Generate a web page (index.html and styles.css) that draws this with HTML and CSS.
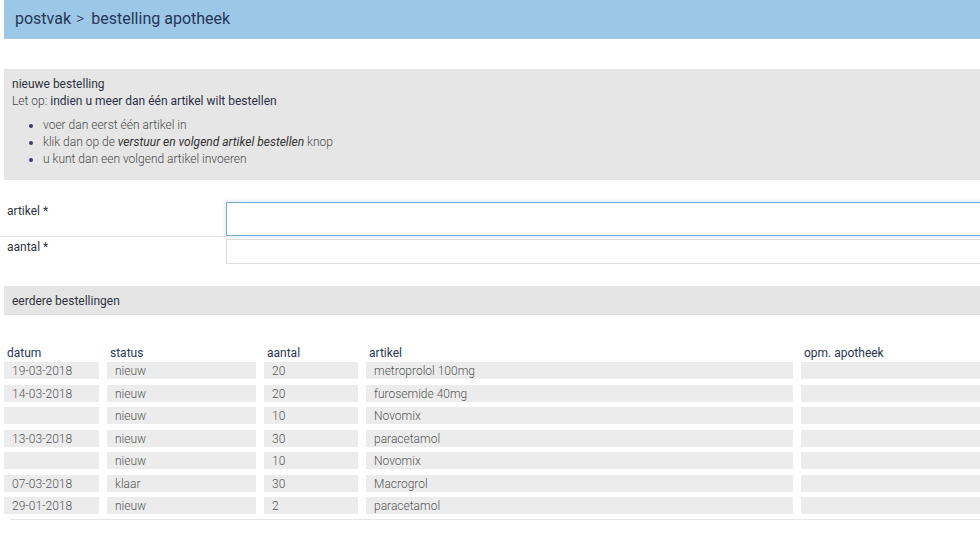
FILE: index.html
```html
<!DOCTYPE html>
<html lang="nl">
<head>
<meta charset="utf-8">
<title>bestelling apotheek</title>
<link rel="stylesheet" href="styles.css">
</head>
<body>
<div class="page">
  <header class="titlebar">
    <h1 class="title">postvak <span class="sep">&gt;</span> bestelling apotheek</h1>
  </header>

  <section class="notice">
    <p class="notice-title">nieuwe bestelling</p>
    <p class="notice-warn"><span class="light">Let op:</span> indien u meer dan één artikel wilt bestellen</p>
    <ul class="notice-list">
      <li>voer dan eerst één artikel in</li>
      <li>klik dan op de <em>verstuur en volgend artikel bestellen</em> knop</li>
      <li>u kunt dan een volgend artikel invoeren</li>
    </ul>
  </section>

  <form class="form">
    <div class="form-row form-row-first">
      <label class="form-label" for="artikel">artikel *</label>
      <input class="form-input form-input-focus" id="artikel" type="text">
    </div>
    <div class="form-row form-row-second">
      <label class="form-label" for="aantal">aantal *</label>
      <input class="form-input form-input-small" id="aantal" type="text">
    </div>
  </form>

  <section class="section-bar">eerdere bestellingen</section>

  <div class="orders">
    <div class="th">datum</div>
    <div class="th">status</div>
    <div class="th">aantal</div>
    <div class="th">artikel</div>
    <div class="th">opm. apotheek</div>

    <div class="td">19-03-2018</div><div class="td">nieuw</div><div class="td">20</div><div class="td">metroprolol 100mg</div><div class="td"></div>
    <div class="td">14-03-2018</div><div class="td">nieuw</div><div class="td">20</div><div class="td">furosemide 40mg</div><div class="td"></div>
    <div class="td"></div><div class="td">nieuw</div><div class="td">10</div><div class="td">Novomix</div><div class="td"></div>
    <div class="td">13-03-2018</div><div class="td">nieuw</div><div class="td">30</div><div class="td">paracetamol</div><div class="td"></div>
    <div class="td"></div><div class="td">nieuw</div><div class="td">10</div><div class="td">Novomix</div><div class="td"></div>
    <div class="td">07-03-2018</div><div class="td">klaar</div><div class="td">30</div><div class="td">Macrogrol</div><div class="td"></div>
    <div class="td">29-01-2018</div><div class="td">nieuw</div><div class="td">2</div><div class="td">paracetamol</div><div class="td"></div>
  </div>
  <div class="orders-end"></div>
</div>
</body>
</html>
```

FILE: styles.css
```css
html, body {
  margin: 0;
  padding: 0;
  overflow: hidden;
  background: #ffffff;
}

body {
  font-family: Roboto, "Liberation Sans", Arial, sans-serif;
  font-size: 12px;
  line-height: 17px;
  color: #2b3550;
}

.page {
  width: 1040px;
  padding-left: 4px;
}

.titlebar {
  height: 39px;
  background: #9cc7e6;
  display: flex;
  align-items: center;
  padding-left: 11px;
}

.title {
  margin: 0;
  font-size: 16px;
  font-weight: 400;
  line-height: 20px;
  color: #263659;
  margin-top: -2px;
}

.sep {
  font-weight: 300;
  margin: 0 3px 0 1px;
}

.notice {
  margin-top: 30px;
  background: #e6e6e6;
  padding: 7px 8px 13px 8px;
  height: 91px;
}

.notice p {
  margin: 0;
}

.notice-title {
  color: #2f3340;
}

.notice-warn {
  color: #2b3045;
}

.light {
  font-weight: 300;
  color: #444;
}

.notice-list {
  margin: 7px 0 0 0;
  padding-left: 31px;
  font-weight: 300;
  color: #4a4a4a;
}

.notice-list li::marker {
  color: #3a4060;
}

.notice-list em {
  font-weight: 400;
  color: #333;
}

.form {
  margin-top: 22px;
  margin-left: -4px;
}

.form-row {
  display: grid;
  grid-template-columns: 226px 1fr;
  align-items: start;
}

.form-label {
  padding-left: 7px;
  color: #2f3340;
}

.form-row-first .form-label {
  padding-top: 1px;
  box-sizing: border-box;
  border-bottom: 1px solid #e3e3e3;
  height: 35px;
}

.form-row-second .form-label {
  padding-top: 2px;
}

.form-input {
  box-sizing: border-box;
  margin: 0;
  width: 100%;
  font: inherit;
  background: #fff;
  border: 1px solid #dcdcdc;
  outline: none;
}

.form-input-focus {
  height: 34px;
  border-color: #79a7cd;
  box-shadow: 0 0 3px 1px rgba(140, 190, 230, 0.35);
}

.form-input-small {
  height: 25px;
  margin-top: 2px;
}

.section-bar {
  margin-top: 22px;
  background: #e5e5e5;
  border-bottom: 1px solid #dedede;
  padding: 7px 8px 4px 8px;
  color: #2f3340;
}

.orders {
  margin-top: 24.5px;
  display: grid;
  grid-template-columns: 95px 149px 94px 427px 220px;
  column-gap: 8px;
  grid-auto-rows: 17px;
  row-gap: 5.5px;
}

.orders .th {
  padding-left: 3px;
  color: #2b3550;
  align-self: end;
  margin-bottom: -5px;
}

.orders .td {
  background: #ececec;
  padding-left: 8px;
  line-height: 18px;
  font-weight: 300;
  color: #555555;
  white-space: nowrap;
  overflow: hidden;
}

.orders-end {
  margin-top: 5px;
  margin-left: 6px;
  border-top: 1px solid #e6e6e6;
}
```
